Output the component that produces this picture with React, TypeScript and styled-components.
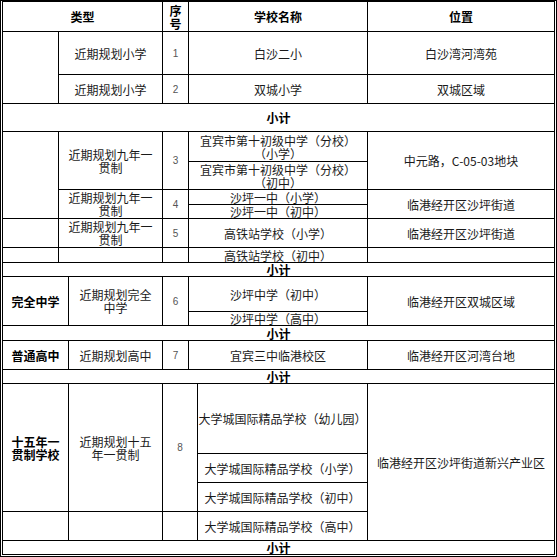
import React from "react"
import styled, { createGlobalStyle, css } from "styled-components"

const GlobalStyle = createGlobalStyle`
  html, body {
    margin: 0;
    padding: 0;
    background: #fff;
  }
  body {
    font-family: "Noto Sans CJK SC", "Noto Sans", sans-serif;
  }
`

// column lines sit at x = 58, 68, 162, 188, 197, 367 in the screenshot
const Sheet = styled.div`
  box-sizing: border-box;
  width: 557px;
  height: 557px;
  display: grid;
  grid-template-columns: 55px 9px 93px 25px 8px 169px 186px;
  grid-template-rows:
    29px 42px 28px 27px 29px 27px 14px 13px 28px 14px 13px
    34px 13px 14px 28px 13px 69px 28px 28px 28px 13px;
  gap: 1px;
  background: #000;
  background-clip: padding-box;
  border: 3px double #000;
  border-top: 2px solid #000;
`

type Kind = "head" | "label" | "text" | "seq" | "total"

const Cell = styled.div<{ $col: string; $row: string; $kind: Kind }>`
  grid-column: ${(p) => p.$col};
  grid-row: ${(p) => p.$row};
  background: #fff;
  display: flex;
  align-items: center;
  justify-content: center;
  text-align: center;
  overflow: hidden;
  white-space: nowrap;
  color: #1a1a1a;
  font-size: 12px;
  line-height: 13px;

  ${(p) =>
    (p.$kind === "head" || p.$kind === "label" || p.$kind === "total") &&
    css`
      font-weight: 700;
      color: #000;
    `}

  ${(p) =>
    p.$kind === "seq" &&
    css`
      font-family: "Liberation Sans", Arial, sans-serif;
      font-size: 10px;
      color: #555;
    `}
`

interface CellDef {
  col: string
  row: string
  kind?: Kind
  text?: React.ReactNode
}

const br = (a: string, b: string) => (
  <span>
    {a}
    <br />
    {b}
  </span>
)

const total = (row: string): CellDef => ({ col: "1 / 8", row, kind: "total", text: "小计" })

const cells: CellDef[] = [
  { col: "1 / 4", row: "1", kind: "head", text: "类型" },
  { col: "4 / 5", row: "1", kind: "head", text: br("序", "号") },
  { col: "5 / 7", row: "1", kind: "head", text: "学校名称" },
  { col: "7 / 8", row: "1", kind: "head", text: "位置" },

  { col: "1 / 2", row: "2 / 4" },
  { col: "2 / 4", row: "2", text: "近期规划小学" },
  { col: "4 / 5", row: "2", kind: "seq", text: "1" },
  { col: "5 / 7", row: "2", text: "白沙二小" },
  { col: "7 / 8", row: "2", text: "白沙湾河湾苑" },
  { col: "2 / 4", row: "3", text: "近期规划小学" },
  { col: "4 / 5", row: "3", kind: "seq", text: "2" },
  { col: "5 / 7", row: "3", text: "双城小学" },
  { col: "7 / 8", row: "3", text: "双城区域" },
  total("4"),

  { col: "1 / 2", row: "5 / 9" },
  { col: "2 / 4", row: "5 / 7", text: br("近期规划九年一", "贯制") },
  { col: "4 / 5", row: "5 / 7", kind: "seq", text: "3" },
  { col: "5 / 7", row: "5", text: br("宜宾市第十初级中学（分校）", "（小学）") },
  { col: "5 / 7", row: "6", text: br("宜宾市第十初级中学（分校）", "（初中）") },
  { col: "7 / 8", row: "5 / 7", text: "中元路，C-05-03地块" },
  { col: "2 / 4", row: "7 / 9", text: br("近期规划九年一", "贯制") },
  { col: "4 / 5", row: "7 / 9", kind: "seq", text: "4" },
  { col: "5 / 7", row: "7", text: "沙坪一中（小学）" },
  { col: "5 / 7", row: "8", text: "沙坪一中（初中）" },
  { col: "7 / 8", row: "7 / 9", text: "临港经开区沙坪街道" },
  { col: "1 / 2", row: "9" },
  { col: "2 / 4", row: "9", text: br("近期规划九年一", "贯制") },
  { col: "4 / 5", row: "9", kind: "seq", text: "5" },
  { col: "5 / 7", row: "9", text: "高铁站学校（小学）" },
  { col: "7 / 8", row: "9", text: "临港经开区沙坪街道" },
  { col: "1 / 2", row: "10" },
  { col: "2 / 4", row: "10" },
  { col: "4 / 5", row: "10" },
  { col: "5 / 7", row: "10", text: "高铁站学校（初中）" },
  { col: "7 / 8", row: "10" },
  total("11"),

  { col: "1 / 3", row: "12 / 14", kind: "label", text: "完全中学" },
  { col: "3 / 4", row: "12 / 14", text: br("近期规划完全", "中学") },
  { col: "4 / 5", row: "12 / 14", kind: "seq", text: "6" },
  { col: "5 / 7", row: "12", text: "沙坪中学（初中）" },
  { col: "5 / 7", row: "13", text: "沙坪中学（高中）" },
  { col: "7 / 8", row: "12 / 14", text: "临港经开区双城区域" },
  total("14"),

  { col: "1 / 3", row: "15", kind: "label", text: "普通高中" },
  { col: "3 / 4", row: "15", text: "近期规划高中" },
  { col: "4 / 5", row: "15", kind: "seq", text: "7" },
  { col: "5 / 7", row: "15", text: "宜宾三中临港校区" },
  { col: "7 / 8", row: "15", text: "临港经开区河湾台地" },
  total("16"),

  { col: "1 / 3", row: "17 / 20", kind: "label", text: br("十五年一", "贯制学校") },
  { col: "3 / 4", row: "17 / 20", text: br("近期规划十五", "年一贯制") },
  { col: "4 / 6", row: "17 / 20", kind: "seq", text: "8" },
  { col: "6 / 7", row: "17", text: "大学城国际精品学校（幼儿园）" },
  { col: "6 / 7", row: "18", text: "大学城国际精品学校（小学）" },
  { col: "6 / 7", row: "19", text: "大学城国际精品学校（初中）" },
  { col: "6 / 7", row: "20", text: "大学城国际精品学校（高中）" },
  { col: "7 / 8", row: "17 / 21", text: "临港经开区沙坪街道新兴产业区" },
  { col: "1 / 3", row: "20" },
  { col: "3 / 4", row: "20" },
  { col: "4 / 6", row: "20" },
  total("21"),
]

export default function App() {
  return (
    <>
      <GlobalStyle />
      <Sheet>
        {cells.map((c, i) => (
          <Cell key={i} $col={c.col} $row={c.row} $kind={c.kind ?? "text"}>
            {c.text}
          </Cell>
        ))}
      </Sheet>
    </>
  )
}
